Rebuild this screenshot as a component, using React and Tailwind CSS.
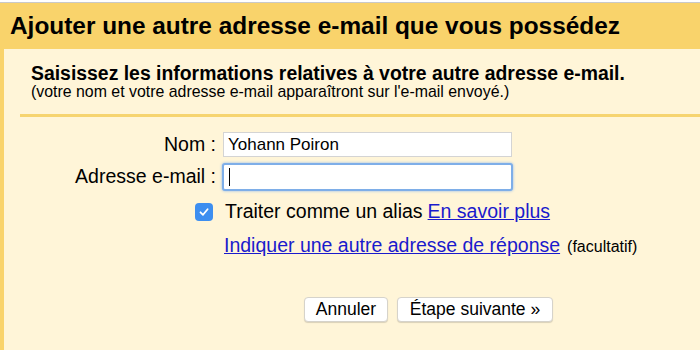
export default function App() {
  return (
    <div className="w-[700px] h-[350px] overflow-hidden bg-[#f9d36b] flex flex-col" style={{ fontFamily: '"Liberation Sans", Arial, sans-serif' }}>
      <div className="h-[3px] bg-white border-b border-[#c9c9c9] shrink-0" />
      <div className="h-[46px] shrink-0 pl-[10px] flex items-center pt-[1px]">
        <h1 className="text-[24.4px] font-bold text-black leading-none">Ajouter une autre adresse e-mail que vous possédez</h1>
      </div>
      <div className="flex-1 ml-[4px] bg-[#fff5d8] flex flex-col">
        <div className="pl-[27px] pt-[14px]">
          <div className="text-[19.4px] font-bold text-black leading-[20px]">Saisissez les informations relatives à votre autre adresse e-mail.</div>
          <div className="text-[15.9px] text-black leading-[17px]">(votre nom et votre adresse e-mail apparaîtront sur l'e-mail envoyé.)</div>
        </div>
        <div className="ml-[16px] mt-[14px] h-[3px] bg-[#f6d470]" />
        <div className="flex flex-col mt-[15px]">
          <div className="flex items-center h-[25px]">
            <div className="w-[212px] text-right text-[19.5px] text-black leading-none">Nom :</div>
            <div className="ml-[7px] w-[289px] h-[25px] bg-white border border-[#d4d4d4] flex items-center pl-[4px] text-[17px] text-black leading-none">Yohann Poiron</div>
          </div>
          <div className="flex items-center h-[28px] mt-[6px]">
            <div className="w-[212px] text-right text-[19.5px] text-black leading-none">Adresse e-mail :</div>
            <div className="ml-[6px] w-[291px] h-[28px] bg-white border-2 border-[#7eaee8] rounded-[3px] shadow-[0_0_3px_#8db9ee] flex items-center pl-[5px]">
              <div className="w-[1px] h-[18px] bg-black" />
            </div>
          </div>
          <div className="flex items-center mt-[11px] h-[19px]">
            <div className="ml-[191px] w-[18px] h-[18px] rounded-[4px] bg-[#3d8ef0] flex items-center justify-center">
              <svg width="12" height="12" viewBox="0 0 12 12"><path d="M2.5 6.3 L5 8.8 L9.6 3.2" fill="none" stroke="white" strokeWidth="1.8" strokeLinecap="round" strokeLinejoin="round" /></svg>
            </div>
            <span className="ml-[12px] text-[19.5px] text-black leading-none">Traiter comme un alias</span>
            <a className="ml-[5px] text-[19.5px] text-[#1a1acc] underline leading-none">En savoir plus</a>
          </div>
          <div className="flex items-baseline mt-[15px] ml-[220px] h-[20px]">
            <a className="text-[19.5px] text-[#1a1acc] underline leading-none">Indiquer une autre adresse de réponse</a>
            <span className="ml-[7px] text-[16px] text-black leading-none">(facultatif)</span>
          </div>
          <div className="flex mt-[41px] ml-[300px] gap-[9px]">
            <button className="h-[25px] w-[84px] bg-white border border-[#d6d3cb] rounded-[4px] shadow-[0_1px_1px_rgba(0,0,0,0.15)] text-[17.5px] text-black leading-none">Annuler</button>
            <button className="h-[25px] w-[156px] bg-white border border-[#d6d3cb] rounded-[4px] shadow-[0_1px_1px_rgba(0,0,0,0.15)] text-[17.5px] text-black leading-none">Étape suivante »</button>
          </div>
        </div>
      </div>
    </div>
  );
}
